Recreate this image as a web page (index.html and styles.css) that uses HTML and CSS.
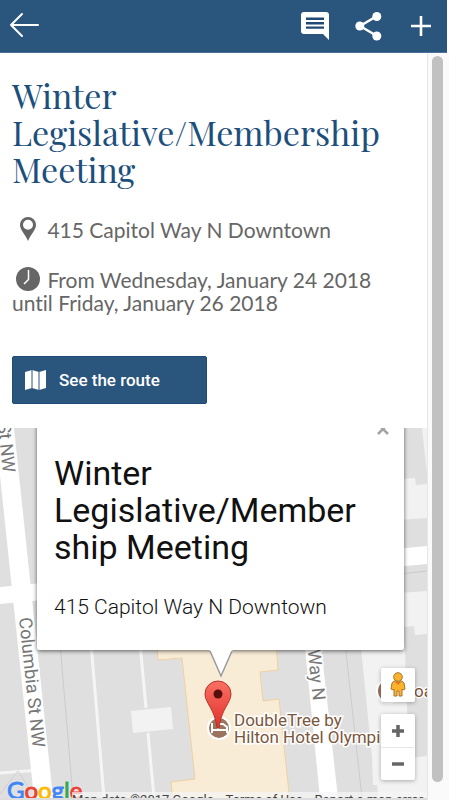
FILE: index.html
```html
<!DOCTYPE html>
<html lang="en">
<head>
    <meta charset="UTF-8">
    <meta name="viewport" content="width=device-width, initial-scale=1.0">
    <title>Winter Legislative/Membership Meeting</title>
    <link rel="stylesheet" href="styles.css">
</head>
<body>
    <header class="topbar">
        <button class="icon-button back" aria-label="Back">
            <svg width="32" height="28" viewBox="0 0 32 28" fill="none" stroke="currentColor" stroke-width="2" stroke-linecap="round" stroke-linejoin="round">
                <path d="M30 13H3M14 2L3 13l11 11"/>
            </svg>
        </button>
        <div class="actions">
            <button class="icon-button" aria-label="Comments">
                <svg width="30" height="30" viewBox="0 0 30 30">
                    <path fill="currentColor" d="M4 1h22a3 3 0 0 1 3 3v25l-6-6H4a3 3 0 0 1-3-3V4a3 3 0 0 1 3-3z"/>
                    <path stroke="#1f4a76" stroke-width="2.4" d="M6 7.800h18M6 12.200h18M6 16.600h18"/>
                </svg>
            </button>
            <button class="icon-button" aria-label="Share">
                <svg width="30" height="30" viewBox="0 0 30 30" fill="currentColor">
                    <path d="M5 15L22 5M5 15l17 10" stroke="currentColor" stroke-width="2.600"/>
                    <circle cx="4.800" cy="15" r="4.500"/>
                    <circle cx="21.800" cy="5.500" r="4.500"/>
                    <circle cx="21.800" cy="25" r="4.500"/>
                </svg>
            </button>
            <button class="icon-button" aria-label="Add">
                <svg width="22" height="22" viewBox="0 0 22 22" stroke="currentColor" stroke-width="2.600">
                    <path d="M11 1v20M1 11h20"/>
                </svg>
            </button>
        </div>
    </header>

    <div class="page">
        <main class="content">
            <section class="details">
                <h1>Winter Legislative/Membership Meeting</h1>
                <p class="info">
                    <svg class="info-icon" width="30" height="25" viewBox="0 0 30 25">
                        <path fill="currentColor" fill-rule="evenodd" d="M16 0a8 8 0 0 1 8 8c0 5-5.500 9.500-8 16-2.500-6.500-8-11-8-16a8 8 0 0 1 8-8zm0 2.800a5 5 0 1 0 0 10 5 5 0 0 0 0-10z"/>
                    </svg>
                    415 Capitol Way N Downtown
                </p>
                <p class="info">
                    <svg class="info-icon" width="30" height="25" viewBox="0 0 30 25">
                        <circle cx="16" cy="12" r="12" fill="currentColor"/>
                        <path d="M16.500 3v9.500l-4.500 4.500" fill="none" stroke="#fff" stroke-width="1.500"/>
                    </svg>
                    From Wednesday, January 24 2018 until Friday, January 26 2018
                </p>
                <button class="route">
                    <svg width="22" height="22" viewBox="0 0 22 22">
                        <path fill="currentColor" d="M0 3l7-2 7 2 7-2v18l-7 2-7-2-7 2z"/>
                        <path d="M7 1v18M14 3v18" stroke="#2a557d"/>
                    </svg>
                    See the route
                </button>
            </section>

            <section class="map" aria-label="Map">
                <svg class="map-canvas" viewBox="0 0 427 370" preserveAspectRatio="xMinYMin slice">
                    <rect width="427" height="370" fill="#dfdfdf"/>

                    <!-- blocks -->
                    <g fill="#f2f2f2">
                        <path d="M400 51l15-1 1 7 11-1v34l-27 2z"/>
                        <path d="M400 165l27-2v50H361l-6-48z"/>
                        <path d="M359 200h68v170h-49l-1-13h-4l-1-28z"/>
                        <path d="M422 0h5v45z"/>
                        <path d="M131 283l40-4 2 22-40 4z"/>
                    </g>
                    <path fill="#dfdfdf" d="M404 199l10-1 1 9 12-1v122l-18 2z"/>
                    <path fill="none" stroke="#cbcbcb" d="M60 215l13 155M345 215l17 155M400 146l27-3"/>
                    <path fill="none" stroke="#f5f5f5" stroke-width="3" d="M91 215l13 155M140 215l6 65M148 305l6 65M0 345l40-3"/>
                    <path fill="none" stroke="#cfcfcf" d="M0 366l18-23 10 16"/>

                    <!-- hotel -->
                    <path fill="#f9ecd7" stroke="#efd19f" d="M156 200l2 32 24-2 13 121-24 3 2 20h117l-11-103-16 2-3-29 18-2-3-45z"/>

                    <!-- streets -->
                    <g fill="#fff">
                        <path d="M-5 0h19l39 370H34z"/>
                        <path d="M303 200h16l19 170h-18z"/>
                        <path d="M0 159l427-41v18L0 176z"/>
                    </g>
                    <g class="street-name">
                        <text transform="translate(19 190) rotate(84)">Columbia St NW</text>
                        <text transform="translate(3 45) rotate(84)" text-anchor="end">Columbia St NW</text>
                        <text transform="translate(313 273) rotate(84)" text-anchor="end">Capitol Way N</text>
                    </g>

                    <!-- places -->
                    <circle cx="219" cy="300" r="11" fill="#9b7460" stroke="#fff" stroke-width="2"/>
                    <path fill="none" stroke="#fff" stroke-width="2" d="M212 295v10m0-3h15v3m0-3v-3l-4-3h-5v6"/>
                    <circle cx="389" cy="263" r="12" fill="#9b7460" stroke="#fff" stroke-width="2"/>
                    <g class="place-name">
                        <text x="234" y="298">DoubleTree by</text>
                        <text x="234" y="315">Hilton Hotel Olympia</text>
                        <text x="414" y="269">oast</text>
                    </g>
                </svg>

                <div class="bubble">
                    <button class="bubble-close" aria-label="Close">
                        <svg width="12" height="12" viewBox="0 0 12 12" stroke="#a3a3a3" stroke-width="2.500">
                            <path d="M1 1l10 10M11 1L1 11"/>
                        </svg>
                    </button>
                    <h2>Winter Legislative/Membership Meeting</h2>
                    <p>415 Capitol Way N Downtown</p>
                    <svg class="bubble-tail" width="28" height="30" viewBox="0 0 28 30">
                        <path fill="#fff" d="M2 0h24L14 27z"/>
                        <path fill="none" stroke="#999" stroke-width="1.500" d="M3 2l11 25L25 2"/>
                    </svg>
                </div>

                <svg class="marker" width="28" height="50" viewBox="0 0 28 50">
                    <defs>
                        <linearGradient id="pin" x1="0" y1="0" x2="0" y2="1">
                            <stop offset="0" stop-color="#fb7064"/>
                            <stop offset="1" stop-color="#e0302a"/>
                        </linearGradient>
                    </defs>
                    <path fill="url(#pin)" stroke="#b3352c" d="M14 1a13 13 0 0 1 13 13c0 9-10 15-12 34h-2C11 29 1 23 1 14A13 13 0 0 1 14 1z"/>
                    <circle cx="14" cy="14" r="4.500" fill="#590f0c"/>
                </svg>

                <div class="controls">
                    <button class="control" aria-label="Street View">
                        <svg width="16" height="26" viewBox="0 0 16 26" fill="#fbb22d" stroke="#a8772b">
                            <path d="M4 9h8l2 2 1 6-2 1-1-1v7H9v-5H7v5H4v-7l-1 1-2-1 1-6z"/>
                            <circle cx="8" cy="5" r="4.300"/>
                            <path d="M5 10h6l-3 3z" fill="#e87722" stroke="none"/>
                        </svg>
                    </button>
                    <div class="zoom">
                        <button class="control" aria-label="Zoom in">
                            <svg width="14" height="14" viewBox="0 0 14 14" stroke="#666" stroke-width="3.500"><path d="M7 1v12M1 7h12"/></svg>
                        </button>
                        <button class="control" aria-label="Zoom out">
                            <svg width="14" height="14" viewBox="0 0 14 14" stroke="#666" stroke-width="3.500"><path d="M1 7h12"/></svg>
                        </button>
                    </div>
                </div>

                <div class="google"><span class="blue">G</span><span class="red">o</span><span class="yellow">o</span><span class="blue">g</span><span class="green">l</span><span class="red">e</span></div>
                <div class="credits">
                    <span>Map data ©2017 Google</span>
                    <a href="#">Terms of Use</a>
                    <a href="#">Report a map error</a>
                </div>
            </section>
        </main>
        <div class="scrollbar"><div class="thumb"></div></div>
    </div>
</body>
</html>
```

FILE: styles.css
```css
* {
    box-sizing: border-box;
}
body {
    margin: 0;
    height: 100vh;
    display: flex;
    flex-direction: column;
    overflow: hidden;
    background: #fff;
    font-family: Roboto, sans-serif;
}
h1, h2, p {
    margin: 0;
    font-weight: 400;
}
button {
    border: 0;
    padding: 0;
    background: none;
    font-family: inherit;
    color: inherit;
}
svg {
    display: block;
}

/* top bar */
.topbar {
    display: flex;
    align-items: center;
    justify-content: space-between;
    height: 53px;
    margin-right: 2px;
    padding: 0 15px 0 8px;
    background: #2a557d;
    border-bottom: 1px solid #48709a;
    color: #fff;
}
.actions {
    display: flex;
    align-items: center;
    gap: 25px;
}

/* event */
.page {
    flex: 1;
    min-height: 0;
    display: flex;
}
.content {
    flex: 1;
    min-width: 0;
    display: flex;
    flex-direction: column;
    border-bottom: 2px solid #ddd;
}
.details {
    padding: 24px 12px;
}
.details h1 {
    margin-bottom: 29px;
    font-family: "Playfair Display", "Liberation Serif", serif;
    font-size: 34px;
    line-height: 37px;
    color: #1d4f7c;
}
.info {
    margin-bottom: 25px;
    font-family: Lato, sans-serif;
    font-size: 21px;
    line-height: 22px;
    font-variant-ligatures: none;
    color: #666;
}
.info-icon {
    display: inline-block;
    vertical-align: -4px;
}
.route {
    display: flex;
    align-items: center;
    gap: 12px;
    width: 195px;
    height: 48px;
    margin-top: 42px;
    padding: 0 12px;
    border-radius: 2px;
    background: #2a557d;
    border: 1px solid #1d4a76;
    color: #fff;
    font-size: 17px;
    font-weight: 500;
}

/* map */
.map {
    position: relative;
    flex: 1;
    min-height: 0;
    overflow: hidden;
}
.map-canvas {
    position: absolute;
    width: 100%;
    height: 100%;
}
.street-name {
    font-size: 18px;
    fill: #777;
    stroke: #fff;
    stroke-width: 3px;
    paint-order: stroke;
}
.place-name {
    font-size: 17px;
    fill: #7b563c;
    stroke: #fff;
    stroke-width: 3px;
    paint-order: stroke;
}
.bubble {
    position: absolute;
    top: -8px;
    left: 37px;
    right: 23px;
    height: 230px;
    padding: 35px 45px 0 17px;
    border-radius: 2px;
    background: #fff;
    box-shadow: 0 1px 4px rgba(0, 0, 0, 0.6);
    color: #111;
}
.bubble h2 {
    margin-bottom: 29px;
    font-size: 34px;
    line-height: 37px;
    overflow-wrap: anywhere;
}
.bubble p {
    font-size: 21px;
    line-height: 24px;
    font-weight: 300;
}
.bubble-close {
    position: absolute;
    top: 3px;
    right: 15px;
}
.bubble-tail {
    position: absolute;
    top: 229px;
    left: 170px;
}
.marker {
    position: absolute;
    top: 252px;
    left: 204px;
}
.controls {
    position: absolute;
    right: 12px;
    bottom: 18px;
    display: grid;
    gap: 12px;
}
.control {
    display: grid;
    place-items: center;
    width: 34px;
    height: 34px;
    border-radius: 2px;
    background: #fff;
    box-shadow: 0 1px 4px rgba(0, 0, 0, 0.3);
}
.zoom {
    border-radius: 2px;
    background: #fff;
    box-shadow: 0 1px 4px rgba(0, 0, 0, 0.3);
}
.zoom .control {
    height: 33px;
    background: none;
    box-shadow: none;
}
.zoom .control + .control {
    border-top: 1px solid #e6e6e6;
}
.google {
    position: absolute;
    left: 7px;
    bottom: -6px;
    font-family: Lato, sans-serif;
    font-size: 24px;
    line-height: 28px;
    -webkit-text-stroke: 1px;
    text-shadow: 0 0 2px #fff, 0 0 2px #fff;
}
.blue {
    color: #4285f4;
}
.red {
    color: #ea4335;
}
.yellow {
    color: #fbbc05;
}
.green {
    color: #34a853;
}
.credits {
    position: absolute;
    left: 72px;
    right: 0;
    bottom: -9px;
    display: flex;
    gap: 12px;
    height: 15px;
    background: rgba(245, 245, 245, 0.7);
    font-size: 13px;
    line-height: 15px;
    white-space: nowrap;
    color: #444;
}
.credits a {
    color: #444;
    text-decoration: none;
}

/* scrollbar */
.scrollbar {
    width: 22px;
    padding: 3px 6px 18px 4px;
    background: #fafafa;
    border-left: 1px solid #e6e6e6;
}
.thumb {
    height: 100%;
    border-radius: 6px;
    background: #c1c1c1;
}
```
